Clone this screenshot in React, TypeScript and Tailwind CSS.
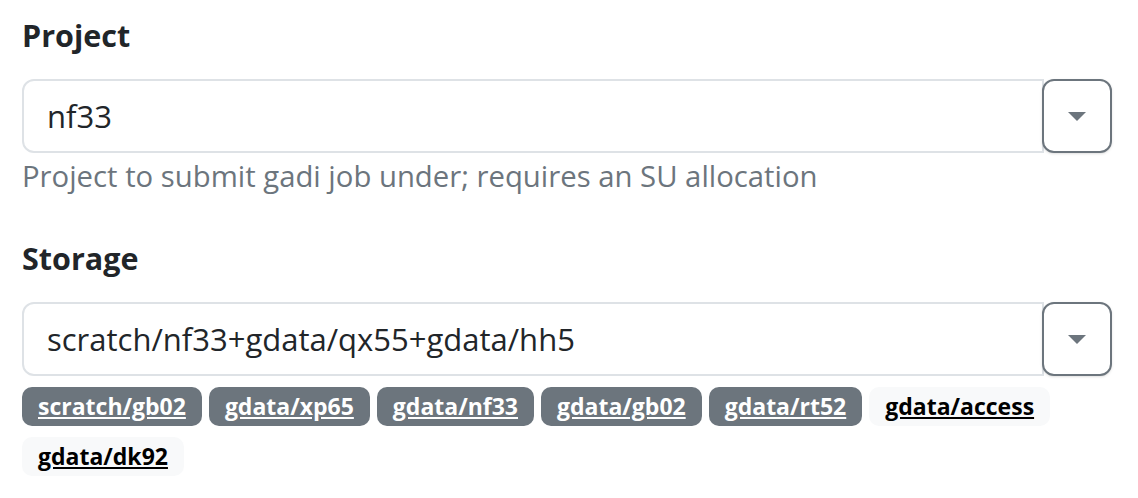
const storageTags = [
  { label: "scratch/gb02", dark: true },
  { label: "gdata/xp65", dark: true },
  { label: "gdata/nf33", dark: true },
  { label: "gdata/gb02", dark: true },
  { label: "gdata/rt52", dark: true },
  { label: "gdata/access", dark: false },
  { label: "gdata/dk92", dark: false },
];

function Caret() {
  return (
    <svg width="18" height="9" viewBox="0 0 18 9" className="fill-[#6c757d]">
      <path d="M0 0 H18 L9 9 Z" />
    </svg>
  );
}

function ComboField({ value }: { value: string }) {
  return (
    <div className="flex items-stretch h-[74px]">
      <div className="flex-1 flex items-center pl-[23px] border-2 border-[#dee2e6] rounded-l-[12px] bg-white text-[31px] text-[#212529]">
        {value}
      </div>
      <button className="-ml-[2px] w-[70px] flex items-center justify-center border-2 border-[#6c757d] rounded-[12px] bg-white shadow-sm">
        <Caret />
      </button>
    </div>
  );
}

export default function App() {
  return (
    <div
      className="w-[1138px] h-[498px] bg-white pl-[22px] pr-[26px] pt-[14px] text-[#212529]"
      style={{ fontFamily: '"Open Sans", "Noto Sans", sans-serif' }}
    >
      {/* Project */}
      <label className="block text-[30.5px] font-bold leading-[42px]">Project</label>
      <div className="mt-[23px]">
        <ComboField value="nf33" />
      </div>
      <p className="mt-[5px] text-[29.3px] leading-[36px] text-[#6c757d]">
        Project to submit gadi job under; requires an SU allocation
      </p>

      {/* Storage */}
      <label className="block mt-[43px] text-[30.5px] font-bold leading-[42px]">Storage</label>
      <div className="mt-[23px]">
        <ComboField value="scratch/nf33+gdata/qx55+gdata/hh5" />
      </div>
      <div className="mt-[11px] flex flex-wrap gap-x-[7px] gap-y-[11px]">
        {storageTags.map((t) => (
          <a
            key={t.label}
            href="#"
            className={
              t.dark
                ? "h-[39px] px-[16px] flex items-center rounded-[10px] bg-[#6c757d] text-white text-[23px] font-bold underline"
                : "h-[39px] px-[16px] flex items-center rounded-[10px] bg-[#f8f9fa] text-black text-[23px] font-bold underline"
            }
          >
            {t.label}
          </a>
        ))}
      </div>
    </div>
  );
}
